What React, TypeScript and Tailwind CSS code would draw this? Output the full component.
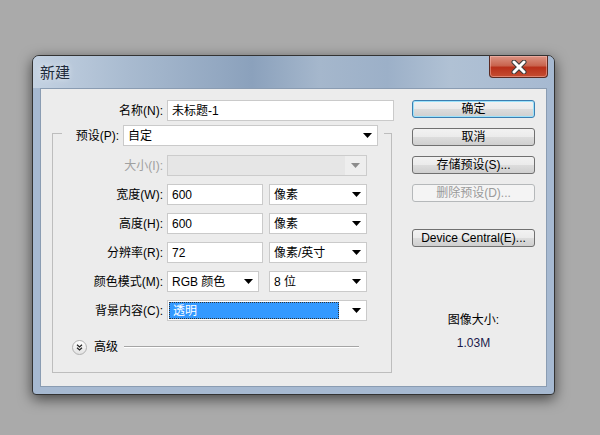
import React from "react";

const font = "font-['Liberation_Sans','Noto_Sans_CJK_SC',sans-serif]";

function Arrow({ disabled = false }: { disabled?: boolean }) {
  return (
    <svg width="9" height="5" viewBox="0 0 9 5" className="shrink-0">
      <path d="M0 0H9L4.5 5Z" fill={disabled ? "#8c8c8c" : "#000"} />
    </svg>
  );
}

function TextBox({ value, className = "" }: { value: string; className?: string }) {
  return (
    <div
      className={`flex h-[21px] items-center border border-[#cacaca] bg-white pl-[4px] text-[12px] text-black ${className}`}
    >
      {value}
    </div>
  );
}

function Select({ value, className = "" }: { value: string; className?: string }) {
  return (
    <div
      className={`flex h-[21px] items-center justify-between border border-[#cacaca] bg-white pr-[5px] pl-[4px] text-[12px] text-black ${className}`}
    >
      <span>{value}</span>
      <Arrow />
    </div>
  );
}

function Label({ children, disabled = false }: { children: React.ReactNode; disabled?: boolean }) {
  return (
    <div
      className={`w-[110px] shrink-0 text-right text-[12px] ${disabled ? "text-[#a0a0a0]" : "text-black"}`}
    >
      {children}
    </div>
  );
}

function Row({ label, children, disabled }: { label: string; children: React.ReactNode; disabled?: boolean }) {
  return (
    <div className="flex h-[21px] items-center gap-[4px]">
      <Label disabled={disabled}>{label}</Label>
      <div className="flex w-[200px] items-center">{children}</div>
    </div>
  );
}

function Button({
  children,
  primary = false,
  disabled = false,
}: {
  children: React.ReactNode;
  primary?: boolean;
  disabled?: boolean;
}) {
  const look = disabled
    ? "border-[#b5b8ba] bg-[#f4f4f4] text-[#9a9a9a]"
    : primary
      ? "border-[#3c7fb1] bg-[linear-gradient(#f2f2f2,#ebebeb_50%,#dddddd_50%,#cfcfcf)] text-black shadow-[inset_0_0_0_1px_#9be2fb]"
      : "border-[#707070] bg-[linear-gradient(#f2f2f2,#ebebeb_50%,#dddddd_50%,#cfcfcf)] text-black";
  return (
    <div
      className={`flex h-[18px] w-[123px] items-center justify-center rounded-[3px] border text-[12px] leading-none ${look}`}
    >
      {children}
    </div>
  );
}

export default function App() {
  return (
    <div className={`h-[435px] w-[600px] overflow-hidden bg-[#aaaaaa] pt-[55px] pl-[32px] ${font}`}>
      <div className="flex h-[340px] w-[523px] flex-col rounded-t-[7px] rounded-b-[4px] border border-[#333333] bg-[#a6b9d1] px-[7px] pb-[7px] shadow-[0_4px_14px_rgba(0,0,0,0.6)]">
        {/* title bar */}
        <div className="-mx-[7px] flex h-[32px] items-start justify-between rounded-t-[6px] bg-[linear-gradient(90deg,#c4d2e2_0%,#a9bbd0_18%,#8ba1bc_42%,#a5b7cc_55%,#9cb0c8_68%,#b0c1d4_80%,#a6b9d1_100%)] pl-[7px] pr-[6px]">
          <div className="pt-[8px] text-[15px] leading-[17px] text-[#1e2b3b] [text-shadow:0_0_6px_rgba(255,255,255,0.7)]">
            新建
          </div>
          <div className="flex h-[22px] w-[59px] items-center justify-center rounded-b-[4px] border border-t-0 border-[#5a2a22] bg-[linear-gradient(#dc9484,#c9654f_45%,#b8301a_55%,#c54e32)] shadow-[inset_0_0_0_1px_rgba(255,200,190,0.45)]">
            <svg width="18" height="14" viewBox="0 0 18 14">
              <path d="M4 2L14 12M14 2L4 12" stroke="#3b3b3b" strokeWidth="5" strokeLinecap="round" />
              <path d="M4 2L14 12M14 2L4 12" stroke="#ffffff" strokeWidth="3" strokeLinecap="round" />
            </svg>
          </div>
        </div>

        {/* client area */}
        <div className="flex flex-1 border border-[#8a9cb2] bg-[#ececec]">
          {/* left column */}
          <div className="w-[371px] pt-[11px]">
            <div className="flex h-[21px] items-center gap-[4px]">
              <div className="w-[122px] text-right text-[12px] text-black">名称(N):</div>
              <TextBox value="未标题-1" className="w-[227px]" />
            </div>

            {/* preset group */}
            <div className="mt-[4px] ml-[11px] w-[340px]">
              <div className="flex h-[21px] items-start">
                <div className="mt-[8px] h-[13px] w-[10px] border-t border-l border-[#bdbdbd]" />
                <div className="flex h-[21px] w-[57px] items-center justify-end text-[12px] text-black">
                  预设(P):
                </div>
                <Select value="自定" className="ml-[4px] w-[255px]" />
                <div className="mt-[8px] ml-[6px] h-[13px] w-[8px] border-t border-r border-[#bdbdbd]" />
              </div>
              <div className="flex flex-col gap-[8px] border-r border-b border-l border-[#bdbdbd] pt-[9px] pb-[17px]">
                <Row label="大小(I):" disabled>
                  <div className="flex h-[21px] w-full border border-[#cccccc] bg-[#e6e6e6]">
                    <div className="flex-1" />
                    <div className="flex w-[21px] items-center justify-center bg-[#eeeeee]">
                      <Arrow disabled />
                    </div>
                  </div>
                </Row>
                <Row label="宽度(W):">
                  <TextBox value="600" className="w-[96px]" />
                  <Select value="像素" className="ml-[6px] w-[98px]" />
                </Row>
                <Row label="高度(H):">
                  <TextBox value="600" className="w-[96px]" />
                  <Select value="像素" className="ml-[6px] w-[98px]" />
                </Row>
                <Row label="分辨率(R):">
                  <TextBox value="72" className="w-[96px]" />
                  <Select value="像素/英寸" className="ml-[6px] w-[98px]" />
                </Row>
                <Row label="颜色模式(M):">
                  <Select value="RGB 颜色" className="w-[92px]" />
                  <Select value="8 位" className="ml-[10px] w-[98px]" />
                </Row>
                <Row label="背景内容(C):">
                  <div className="flex h-[21px] w-full items-center border border-[#cacaca] bg-white pr-[5px] pl-[1px]">
                    <div className="flex h-[17px] flex-1 items-center border border-dotted border-[#333] bg-[#3399ff] pl-[3px] text-[12px] text-white">
                      透明
                    </div>
                    <div className="flex w-[22px] justify-end">
                      <Arrow />
                    </div>
                  </div>
                </Row>
                <div className="mt-[10px] flex h-[16px] items-center pl-[19px]">
                  <div className="flex h-[15px] w-[15px] items-center justify-center rounded-full border border-[#b0b0b0] bg-[linear-gradient(#ffffff,#e2e2e2)]">
                    <svg width="7" height="7" viewBox="0 0 7 7">
                      <path d="M1 0.8L3.5 3L6 0.8M1 3.8L3.5 6L6 3.8" stroke="#222" strokeWidth="1.2" fill="none" />
                    </svg>
                  </div>
                  <div className="ml-[7px] text-[12px] text-black">高级</div>
                  <div className="ml-[6px] h-[2px] w-[235px] border-t border-b border-t-[#a5a5a5] border-b-white" />
                </div>
              </div>
            </div>
          </div>

          {/* right column */}
          <div className="flex w-[123px] flex-col pt-[11px]">
            <div className="flex flex-col gap-[10px]">
              <Button primary>确定</Button>
              <Button>取消</Button>
              <Button>存储预设(S)...</Button>
              <Button disabled>删除预设(D)...</Button>
            </div>
            <div className="mt-[27px]">
              <Button>Device Central(E)...</Button>
            </div>
            <div className="mt-[66px] text-center text-[12px] leading-[14px] text-black">图像大小:</div>
            <div className="mt-[9px] text-center text-[12px] leading-[14px] text-[#1a1a4a]">1.03M</div>
          </div>
        </div>
      </div>
    </div>
  );
}
